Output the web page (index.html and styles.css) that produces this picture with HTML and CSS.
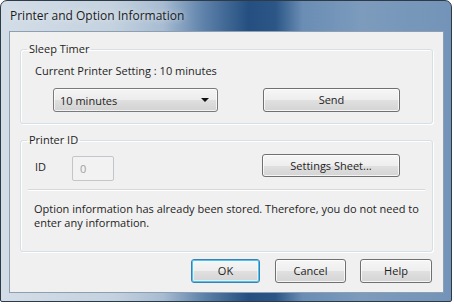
FILE: index.html
```html
<!DOCTYPE html>
<html>
<head>
<meta charset="utf-8">
<link rel="stylesheet" href="styles.css">
</head>
<body>
<div class="window">
  <div class="titlebar">Printer and Option Information</div>
  <div class="client">
    <fieldset class="group group-sleep">
      <legend>Sleep Timer</legend>
      <div class="setting">Current Printer Setting : 10 minutes</div>
      <div class="row row-sleep">
        <div class="combo"><span>10 minutes</span><span class="arrow"></span></div>
        <div class="btn btn-send">Send</div>
      </div>
    </fieldset>
    <fieldset class="group group-id">
      <legend>Printer ID</legend>
      <div class="row row-id">
        <span class="id-label">ID</span>
        <div class="input">0</div>
        <div class="btn btn-sheet">Settings Sheet...</div>
      </div>
      <div class="sep"></div>
      <p class="msg">Option information has already been stored. Therefore, you do not need to<br>enter any information.</p>
    </fieldset>
    <div class="actions">
      <div class="btn btn-ok">OK</div>
      <div class="btn btn-cancel">Cancel</div>
      <div class="btn btn-help">Help</div>
    </div>
  </div>
</div>
</body>
</html>
```
FILE: styles.css
```css
* { box-sizing: border-box; }
html, body { margin: 0; padding: 0; background: #ffffff; }
body {
  font-family: "Open Sans", "Noto Sans", sans-serif;
  font-size: 11px;
  color: #1e1e1e;
}
.window {
  width: 452px;
  height: 302px;
  border: 1px solid #2f3a47;
  border-radius: 7px 7px 2px 2px;
  padding: 0 7px 8px 8px;
  display: flex;
  flex-direction: column;
  background: linear-gradient(90deg, #d3dde7 0%, #c4d2df 25%, #a7bcd2 36%, #5e82aa 45%, #244f80 55%, #2b5686 61%, #6a8db4 67%, #7c9bbd 80%, #7394b8 100%);
}
.titlebar {
  height: 30px;
  padding: 5px 0 0 1px;
  font-size: 12px;
  line-height: 20px;
  color: #1b1b1b;
  text-shadow: 0 0 6px rgba(255,255,255,0.8);
}
.client {
  flex: 1;
  background: #f0f0f0;
  border: 1px solid #8e9fb2;
  padding: 9px 10px 0 10px;
  display: flex;
  flex-direction: column;
}
.group {
  margin: 0;
  border: 1px solid #d5dfe5;
  border-radius: 3px;
  box-shadow: inset 1px 1px 0 #ffffff, 1px 1px 0 #ffffff;
  padding: 0 0 0 14px;
}
.group legend {
  padding: 0 2px;
  margin-left: -8px;
  line-height: 16px;
}
.group-sleep { height: 83px; }
.setting {
  line-height: 16px;
  margin-top: 6px;
}
.row { display: flex; align-items: flex-start; }
.row-sleep { margin-top: 9px; }
.combo {
  width: 165px;
  height: 24px;
  margin-left: 18px;
  border: 1px solid #7a7a7a;
  border-radius: 3px;
  background: linear-gradient(#f4f4f4 0%, #ececec 50%, #dfdfdf 51%, #d2d2d2 100%);
  display: flex;
  align-items: center;
  justify-content: space-between;
  padding: 0 6px 0 6px;
  box-shadow: inset 0 0 0 1px rgba(255,255,255,0.7);
}
.arrow {
  width: 0;
  height: 0;
  border-left: 4px solid transparent;
  border-right: 4px solid transparent;
  border-top: 4px solid #111;
  margin-right: 2px;
}
.btn {
  height: 24px;
  border: 1px solid #707070;
  border-radius: 3px;
  background: linear-gradient(#f6f6f6 0%, #eeeeee 50%, #e0e0e0 51%, #d4d4d4 100%);
  box-shadow: inset 0 0 0 1px rgba(255,255,255,0.75);
  display: flex;
  align-items: center;
  justify-content: center;
  line-height: 16px;
}
.btn-send { width: 137px; margin-left: 45px; }
.group-id { margin-top: 8px; height: 120px; }
.row-id { margin-top: 6px; height: 27px; }
.id-label { margin-top: 5px; width: 37px; line-height: 16px; }
.input {
  width: 42px;
  height: 25px;
  margin-top: 2px;
  border: 1px solid #c2c6ca;
  border-radius: 2px;
  background: #f2f2f2;
  color: #a0a0a0;
  padding: 4px 0 0 7px;
  line-height: 16px;
}
.btn-sheet { width: 138px; height: 23px; margin-left: 148px; }
.sep {
  margin: 8px 7px 0 -7px;
  height: 2px;
  border-top: 1px solid #d8d8d8;
  border-bottom: 1px solid #ffffff;
}
.msg {
  margin: 11px 0 0 -1px;
  line-height: 14px;
  white-space: nowrap;
}
.actions {
  display: flex;
  justify-content: flex-end;
  margin-top: 7px;
  padding-right: 1px;
}
.btn-ok {
  width: 69px;
  border-color: #3c7fb1;
  box-shadow: inset 0 0 0 1px #48c8f0, inset 0 0 0 2px rgba(255,255,255,0.5);
}
.btn-cancel { width: 71px; margin-left: 15px; }
.btn-help { width: 72px; margin-left: 14px; }
```
